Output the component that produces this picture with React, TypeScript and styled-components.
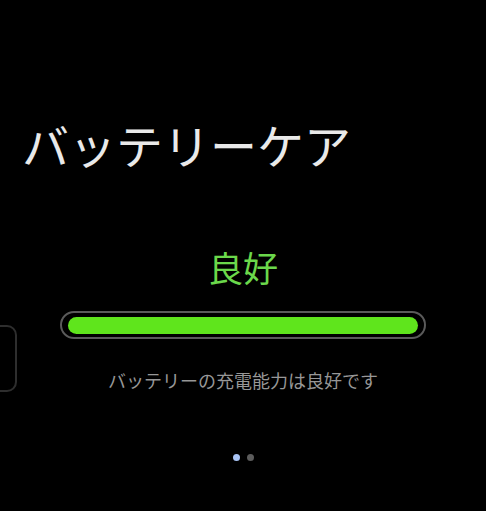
import React from 'react';
import styled, { createGlobalStyle } from 'styled-components';

const GlobalStyle = createGlobalStyle`
  html, body {
    margin: 0;
    padding: 0;
    background: #000;
  }
  body {
    font-family: "Noto Sans CJK JP", "Noto Sans", sans-serif;
  }
`;

const Screen = styled.div`
  position: relative;
  width: 486px;
  height: 511px;
  background: #000;
  overflow: hidden;
  display: flex;
  flex-direction: column;
`;

const Title = styled.h1`
  margin: 112px 0 0 22px;
  font-size: 47px;
  font-weight: 400;
  line-height: 64px;
  color: #e9e9e9;
`;

const Status = styled.div`
  margin-top: 66px;
  text-align: center;
  font-size: 35px;
  line-height: 50px;
  color: #6bd84b;
`;

const BarTrack = styled.div`
  margin: 19px 0 0 60px;
  width: 366px;
  height: 28px;
  box-sizing: border-box;
  border: 2px solid #5a5a5a;
  border-radius: 14px;
  padding: 3px 6px;
  display: flex;
  align-items: center;
`;

const BarFill = styled.div`
  height: 17px;
  border-radius: 9px;
  background: #5fe51c;
`;

const Caption = styled.div`
  margin-top: 28px;
  text-align: center;
  font-size: 18px;
  line-height: 26px;
  color: #979797;
`;

const Dots = styled.div`
  margin-top: 61px;
  display: flex;
  justify-content: center;
  gap: 7px;
`;

const Dot = styled.span<{ active?: boolean }>`
  width: 7px;
  height: 7px;
  border-radius: 50%;
  background: ${(p) => (p.active ? '#a9c4f5' : '#5c5c5c')};
`;

const SideCard = styled.div`
  position: absolute;
  left: -20px;
  top: 325px;
  width: 37px;
  height: 67px;
  box-sizing: border-box;
  border: 2px solid #2e2e2e;
  border-radius: 10px;
`;

export default function App() {
  const level = 100;
  return (
    <>
      <GlobalStyle />
      <Screen>
        <SideCard />
        <Title>バッテリーケア</Title>
        <Status>良好</Status>
        <BarTrack>
          <BarFill style={{ width: `${level}%` }} />
        </BarTrack>
        <Caption>バッテリーの充電能力は良好です</Caption>
        <Dots>
          <Dot active />
          <Dot />
        </Dots>
      </Screen>
    </>
  );
}
